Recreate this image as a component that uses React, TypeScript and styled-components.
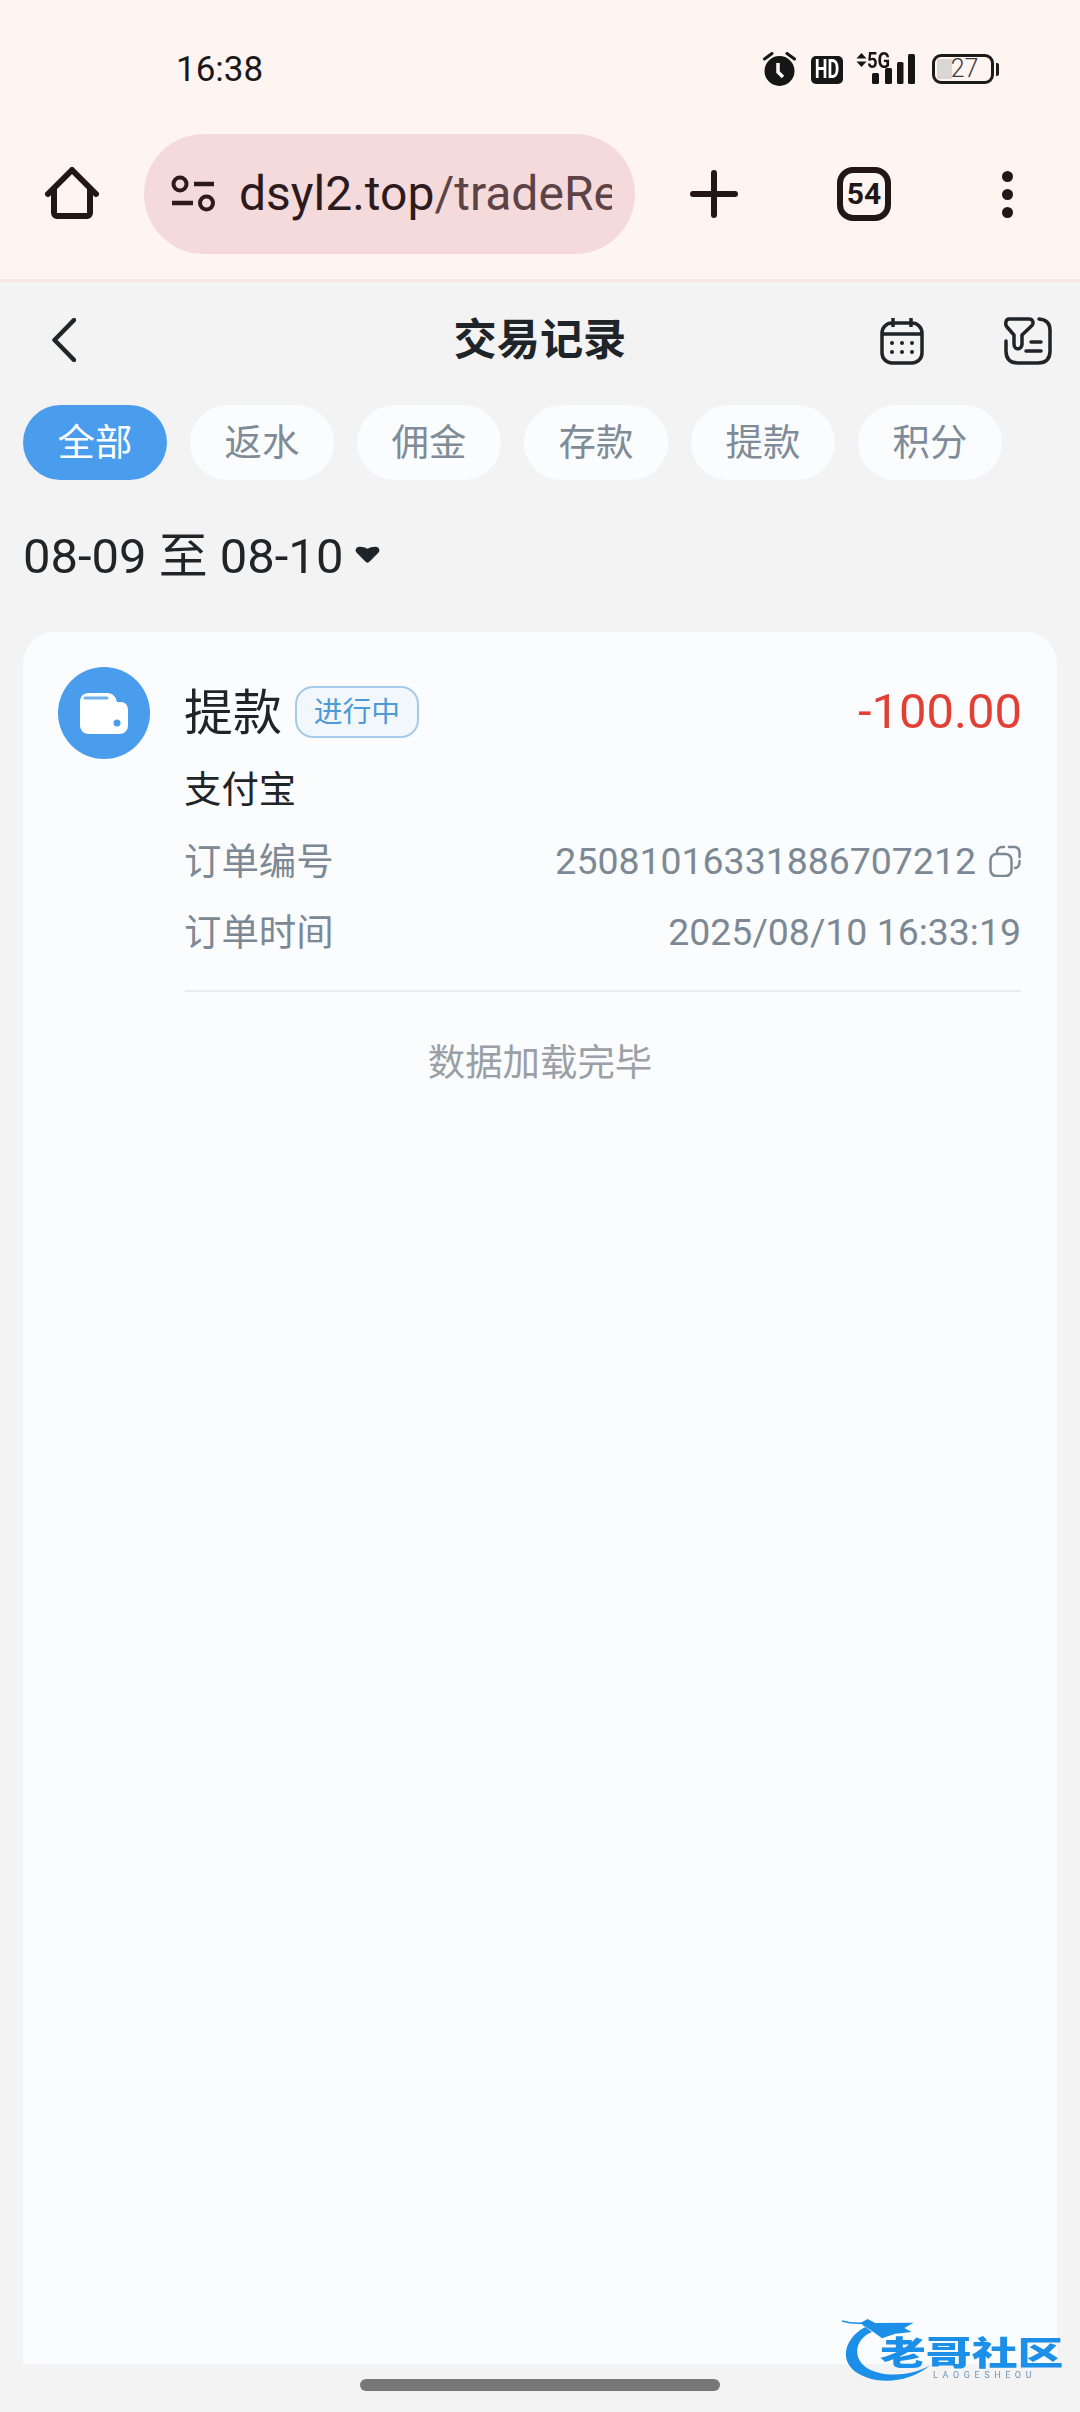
import styled, {createGlobalStyle} from "styled-components";

const GlobalStyle = createGlobalStyle`
  html, body {
    margin: 0;
    padding: 0;
    background: #f3f3f4;
  }
  body {
    font-family: Roboto, "Noto Sans CJK SC", sans-serif;
  }
  * {
    box-sizing: border-box;
  }
`;

const Page = styled.div`
  position: relative;
  width: 1080px;
  height: 2412px;
  display: flex;
  flex-direction: column;
  overflow: hidden;
  background: #f3f3f4;
`;

const Chrome = styled.div`
  height: 282px;
  background: #fef5f3;
  border-bottom: 3px solid #f9e5e1;
`;

const StatusBar = styled.div`
  height: 134px;
  padding: 52px 81px 0 176px;
  display: flex;
  justify-content: space-between;
  align-items: flex-start;
`;

const Time = styled.div`
  font-size: 35px;
  line-height: 36px;
  color: #1b1718;
`;

const StatusIcons = styled.div`
  display: flex;
  align-items: center;
  height: 34px;
`;

const HdBadge = styled.div`
  width: 32px;
  height: 28px;
  margin: 2px 13px 0 15px;
  border-radius: 5px;
  background: #161616;
  display: flex;
  justify-content: center;
`;

const HdText = styled.span`
  color: #fff;
  font-size: 25px;
  font-weight: 700;
  line-height: 28px;
  transform: scaleX(0.72);
`;

const Signal = styled.div`
  position: relative;
  width: 60px;
  height: 32px;
`;

const FiveG = styled.span`
  position: absolute;
  left: 11px;
  top: -2px;
  font-size: 22px;
  font-weight: 700;
  line-height: 20px;
  color: #161616;
  transform: scaleX(0.84);
  transform-origin: left center;
`;

const Battery = styled.div`
  width: 62px;
  height: 30px;
  margin-left: 16px;
  border: 3px solid #1c1a1a;
  border-radius: 9px;
  background: linear-gradient(#d9d7d6, #d9d7d6) 2px 2px / 15px 20px no-repeat;
  color: #3d3b3b;
  font-size: 25px;
  font-weight: 300;
  line-height: 24px;
  text-align: center;
  padding-left: 3px;
`;

const BatteryTip = styled.div`
  width: 3px;
  height: 13px;
  margin-left: 2px;
  border-radius: 0 2px 2px 0;
  background: #1c1a1a;
`;

const BrowserBar = styled.div`
  height: 120px;
  display: flex;
  align-items: center;
  padding-left: 45px;
`;

const Pill = styled.div`
  width: 491px;
  height: 120px;
  margin-left: 45px;
  padding: 0 23px 0 25px;
  border-radius: 60px;
  background: #f5dadc;
  display: flex;
  align-items: center;
  gap: 24px;
`;

const SiteIcon = styled.svg`
  flex: none;
`;

const Url = styled.div`
  flex: 1;
  overflow: hidden;
  white-space: nowrap;
  font-size: 48px;
  line-height: 64px;
  color: #2c1a1c;
`;

const UrlPath = styled.span`
  color: #5d4346;
`;

const PlusIcon = styled.svg`
  margin-left: 55px;
`;

const TabCount = styled.div`
  width: 54px;
  height: 54px;
  margin-left: 99px;
  border: 6px solid #231617;
  border-radius: 16px;
  color: #231617;
  font-size: 30px;
  font-weight: 700;
  line-height: 42px;
  text-align: center;
`;

const MenuDots = styled.div`
  margin-left: 111px;
  display: flex;
  flex-direction: column;
  gap: 7px;
`;

const MenuDot = styled.span`
  width: 11px;
  height: 11px;
  border-radius: 50%;
  background: #231617;
`;

const Header = styled.div`
  height: 116px;
  display: grid;
  grid-template-columns: 1fr 173px 1fr;
  align-items: center;
`;

const HeaderLeft = styled.div`
  padding-left: 52px;
  display: flex;
`;

const HeaderRight = styled.div`
  padding: 2px 28px 0 0;
  display: flex;
  justify-content: flex-end;
  gap: 80px;
`;

const Title = styled.div`
  margin-top: 2px;
  font-size: 43.2px;
  font-weight: 700;
  line-height: 52px;
  color: #1f2429;
  white-space: nowrap;
`;

const Chips = styled.div`
  margin-top: 7px;
  padding-left: 23px;
  display: flex;
  gap: 23px;
`;

const Chip = styled.div<{ $active?: boolean }>`
  width: 144px;
  height: 75px;
  border-radius: 38px;
  background: ${props => props.$active ? "#4a9cec" : "#fbfcfe"};
  color: ${props => props.$active ? "#fff" : "#7f8b96"};
  font-size: 37.44px;
  line-height: 76px;
  text-align: center;
`;

const DateRow = styled.div`
  height: 60px;
  margin-top: 45px;
  padding-left: 23px;
  display: flex;
  align-items: center;
  gap: 12px;
  font-size: 48.96px;
  color: #1f2429;
`;

const DateText = styled.span`
  line-height: 54px;
  margin-top: 3px;
`;

const Card = styled.div`
  flex: 1;
  margin: 47px 23px 0;
  border-radius: 32px 32px 0 0;
  background: #fbfcfe;
`;

const Record = styled.div`
  margin-left: 35px;
  margin-right: 36px;
  padding: 35px 0 23px;
  display: flex;
  gap: 35px;
`;

const RecordIcon = styled.div`
  flex: none;
  width: 92px;
  height: 92px;
  border-radius: 50%;
  background: #4a9cec;
  display: flex;
  align-items: center;
  justify-content: center;
`;

const RecordBody = styled.div`
  flex: 1;
  display: flex;
  flex-direction: column;
`;

const TitleRow = styled.div`
  height: 88px;
  display: flex;
  align-items: center;
`;

const RecordName = styled.div`
  margin: 5px 0 0 -1px;
  font-size: 48.96px;
  line-height: 60px;
  color: #1f2429;
`;

const StatusTag = styled.div`
  width: 124px;
  height: 52px;
  margin: 2px 0 0 13px;
  border: 2px solid #a6cbe8;
  border-radius: 18px;
  background: #f2f7fc;
  color: #4d9ad6;
  font-size: 28.8px;
  line-height: 48px;
  text-align: center;
`;

const Amount = styled.div`
  margin: 2px -1px 0 auto;
  font-size: 48.96px;
  line-height: 60px;
  color: #e23f35;
`;

const Method = styled.div`
  height: 70px;
  margin-left: -1px;
  font-size: 37.44px;
  line-height: 70px;
  color: #1f2429;
`;

const InfoRow = styled.div`
  height: 71px;
  display: flex;
  align-items: center;
  justify-content: space-between;
  color: #7c8994;
`;

const InfoLabel = styled.span`
  margin: 3px 0 0 -1px;
  font-size: 37.44px;
  line-height: 46px;
`;

const InfoValue = styled.div`
  display: flex;
  align-items: center;
  gap: 13px;
  font-size: 37.44px;
  line-height: 46px;
`;

const Divider = styled.div`
  height: 2px;
  margin: 0 36px 0 162px;
  background: #e9ebee;
`;

const EndNote = styled.div`
  height: 142px;
  font-size: 37.44px;
  line-height: 142px;
  color: #9aa0a6;
  text-align: center;
`;

const BottomArea = styled.div`
  height: 48px;
  padding-top: 15px;
  display: flex;
  justify-content: center;
`;

const HomeBar = styled.div`
  width: 360px;
  height: 12px;
  border-radius: 6px;
  background: #777;
`;

const Watermark = styled.div`
  position: absolute;
  left: 842px;
  top: 2312px;
  width: 222px;
  height: 74px;
  filter: blur(0.7px);
`;

const WatermarkArc = styled.svg`
  position: absolute;
  left: 0;
  top: 0;
`;

const WatermarkName = styled.div`
  position: absolute;
  left: 38px;
  top: 22px;
  width: 136px;
  font-size: 33px;
  font-weight: 900;
  line-height: 40px;
  white-space: nowrap;
  color: #1c8fe8;
  transform: scaleX(1.39);
  transform-origin: left center;
`;

const WatermarkSub = styled.div`
  position: absolute;
  left: 91px;
  top: 59px;
  font-size: 9px;
  line-height: 9px;
  letter-spacing: 4.6px;
  white-space: nowrap;
  color: #6f94b5;
`;

function App() {
  const chips = ["全部", "返水", "佣金", "存款", "提款", "积分"];

  return (
    <Page>
      <GlobalStyle/>
      <Chrome>
        <StatusBar>
          <Time>16:38</Time>
          <StatusIcons>
            <svg width="33" height="34" viewBox="0 0 33 34">
              <circle cx="16.500" cy="19" r="15" fill="#161616"/>
              <path d="M1.500 7 L9 1.500 M31.500 7 L24 1.500" stroke="#161616" strokeWidth="3" strokeLinecap="round"/>
              <path d="M15 11 V20 L20 25" fill="none" stroke="#fef5f3" strokeWidth="3.500"/>
            </svg>
            <HdBadge><HdText>HD</HdText></HdBadge>
            <Signal>
              <svg width="60" height="32" viewBox="0 0 60 32">
                <path d="M5.500 0 L10.500 5.500 H0.500 Z M5.500 14 L10.500 8.500 H0.500 Z" fill="#161616"/>
                <rect x="16" y="20" width="7" height="11" rx="1.500" fill="#161616"/>
                <rect x="29" y="15" width="7" height="16" rx="1.500" fill="#161616"/>
                <rect x="41" y="9" width="6.500" height="22" rx="1.500" fill="#161616"/>
                <rect x="52" y="1" width="7" height="30" rx="1.500" fill="#161616"/>
              </svg>
              <FiveG>5G</FiveG>
            </Signal>
            <Battery>27</Battery>
            <BatteryTip/>
          </StatusIcons>
        </StatusBar>
        <BrowserBar>
          <svg width="54" height="54" viewBox="0 0 54 54">
            <path d="M3 27 L27 3 L51 27" fill="none" stroke="#231617" strokeWidth="6" strokeLinecap="round" strokeLinejoin="round"/>
            <path d="M9 22 V46 A3 3 0 0 0 12 49 H42 A3 3 0 0 0 45 46 V22" fill="none" stroke="#231617" strokeWidth="6"/>
          </svg>
          <Pill>
            <SiteIcon width="46" height="38" viewBox="0 0 46 38">
              <circle cx="11" cy="9" r="6.500" fill="none" stroke="#2c1a1c" strokeWidth="4"/>
              <path d="M25 9 H45 M3 28 H24" stroke="#2c1a1c" strokeWidth="4.500"/>
              <circle cx="37.500" cy="28" r="6.500" fill="none" stroke="#2c1a1c" strokeWidth="4"/>
            </SiteIcon>
            <Url>dsyl2.top<UrlPath>/tradeRecord</UrlPath></Url>
          </Pill>
          <PlusIcon width="48" height="48" viewBox="0 0 48 48">
            <path d="M3 24 H45 M24 3 V45" stroke="#231617" strokeWidth="6" strokeLinecap="round"/>
          </PlusIcon>
          <TabCount>54</TabCount>
          <MenuDots>
            <MenuDot/>
            <MenuDot/>
            <MenuDot/>
          </MenuDots>
        </BrowserBar>
      </Chrome>

      <Header>
        <HeaderLeft>
          <svg width="24" height="44" viewBox="0 0 24 44">
            <path d="M22 2 L2.500 22 L22 42" fill="none" stroke="#1f2429" strokeWidth="4.500" strokeLinecap="round" strokeLinejoin="round"/>
          </svg>
        </HeaderLeft>
        <Title>交易记录</Title>
        <HeaderRight>
          <svg width="44" height="48" viewBox="0 0 44 48" fill="none" stroke="#1f2429" strokeWidth="3.500">
            <rect x="2" y="6" width="40" height="40" rx="10"/>
            <path d="M2 17 H42 M13 1 V10 M31 1 V10"/>
            <g fill="#1f2429" stroke="none">
              <circle cx="12" cy="26" r="2"/>
              <circle cx="22" cy="26" r="2"/>
              <circle cx="32" cy="26" r="2"/>
              <circle cx="12" cy="35" r="2"/>
              <circle cx="22" cy="35" r="2"/>
              <circle cx="32" cy="35" r="2"/>
            </g>
          </svg>
          <svg width="48" height="48" viewBox="0 0 48 48" fill="none" stroke="#1f2429" strokeWidth="3.500" strokeLinecap="round" strokeLinejoin="round">
            <path d="M5 2 H25 C29 2 30 6 28 8.500 L18 18 V27 C18 31 14 33 11.500 31 C10 30 10 28 10 27 V18 L3 10 C0.500 7 2 2 5 2 Z"/>
            <path d="M35 2 C42 2.500 46 6 46 13 V34 C46 42 42 46 34 46 H14 C6 46 2 42 2 34 V24"/>
            <path d="M27 25 H37 M22 34 H37"/>
          </svg>
        </HeaderRight>
      </Header>

      <Chips>
        {chips.map((chip, index) => (
          <Chip key={chip} $active={index === 0}>{chip}</Chip>
        ))}
      </Chips>

      <DateRow>
        <DateText>08-09 至 08-10</DateText>
        <svg width="25" height="18" viewBox="0 0 26 18">
          <path d="M5 0.500 C8 0.500 11 1.500 13 2.500 C15 1.500 18 0.500 21 0.500 C25 0.500 26.500 4 24.500 6.500 L15.500 15.500 C14 17.500 12 17.500 10.500 15.500 L1.500 6.500 C-0.500 4 1 0.500 5 0.500 Z" fill="#1f2429"/>
        </svg>
      </DateRow>

      <Card>
        <Record>
          <RecordIcon>
            <svg width="48" height="41" viewBox="0 0 48 41">
              <path d="M9 0 H27 C33 0 36 4 37 9 H41 C45 9 48 12 48 17 V32 C48 38 44 41 39 41 H9 C3 41 0 37 0 32 V9 C0 3 4 0 9 0 Z" fill="#fff"/>
              <path d="M5 5 H27" stroke="#6fb0ee" strokeWidth="3" strokeLinecap="round"/>
              <circle cx="37" cy="30" r="3.500" fill="#4a9cec"/>
            </svg>
          </RecordIcon>
          <RecordBody>
            <TitleRow>
              <RecordName>提款</RecordName>
              <StatusTag>进行中</StatusTag>
              <Amount>-100.00</Amount>
            </TitleRow>
            <Method>支付宝</Method>
            <InfoRow>
              <InfoLabel>订单编号</InfoLabel>
              <InfoValue>
                25081016331886707212
                <svg width="32" height="32" viewBox="0 0 32 32" fill="none" stroke="#7c8994" strokeWidth="2.500" strokeLinecap="round">
                  <rect x="1.500" y="9" width="21" height="22" rx="6"/>
                  <path d="M8 8 V7 A5 5 0 0 1 13 2 H15 M20 2 H25 A5 5 0 0 1 30.500 7 V12 M30.500 16 V18 A5 5 0 0 1 26 23"/>
                </svg>
              </InfoValue>
            </InfoRow>
            <InfoRow>
              <InfoLabel>订单时间</InfoLabel>
              <InfoValue>2025/08/10 16:33:19</InfoValue>
            </InfoRow>
          </RecordBody>
        </Record>
        <Divider/>
        <EndNote>数据加载完毕</EndNote>
      </Card>

      <BottomArea>
        <HomeBar/>
      </BottomArea>

      <Watermark>
        <WatermarkArc width="90" height="74" viewBox="185 95 270 222">
          <path d="M255 140 C205 165 175 225 215 265 C260 310 370 320 450 255 C380 295 280 290 245 250 C215 215 235 170 275 155 Z" fill="#1c8fe8"/>
          <path d="M240 128 L262 116 L285 128 L400 127 L372 143 L394 155 L345 160 L305 174 L272 150 L250 136 Z" fill="#1c8fe8"/>
          <path d="M185 122 C205 128 225 130 250 128" fill="none" stroke="#1c8fe8" strokeWidth="5"/>
        </WatermarkArc>
        <WatermarkName>老哥社区</WatermarkName>
        <WatermarkSub>LAOGESHEOU</WatermarkSub>
      </Watermark>
    </Page>
  );
}

export default App;
